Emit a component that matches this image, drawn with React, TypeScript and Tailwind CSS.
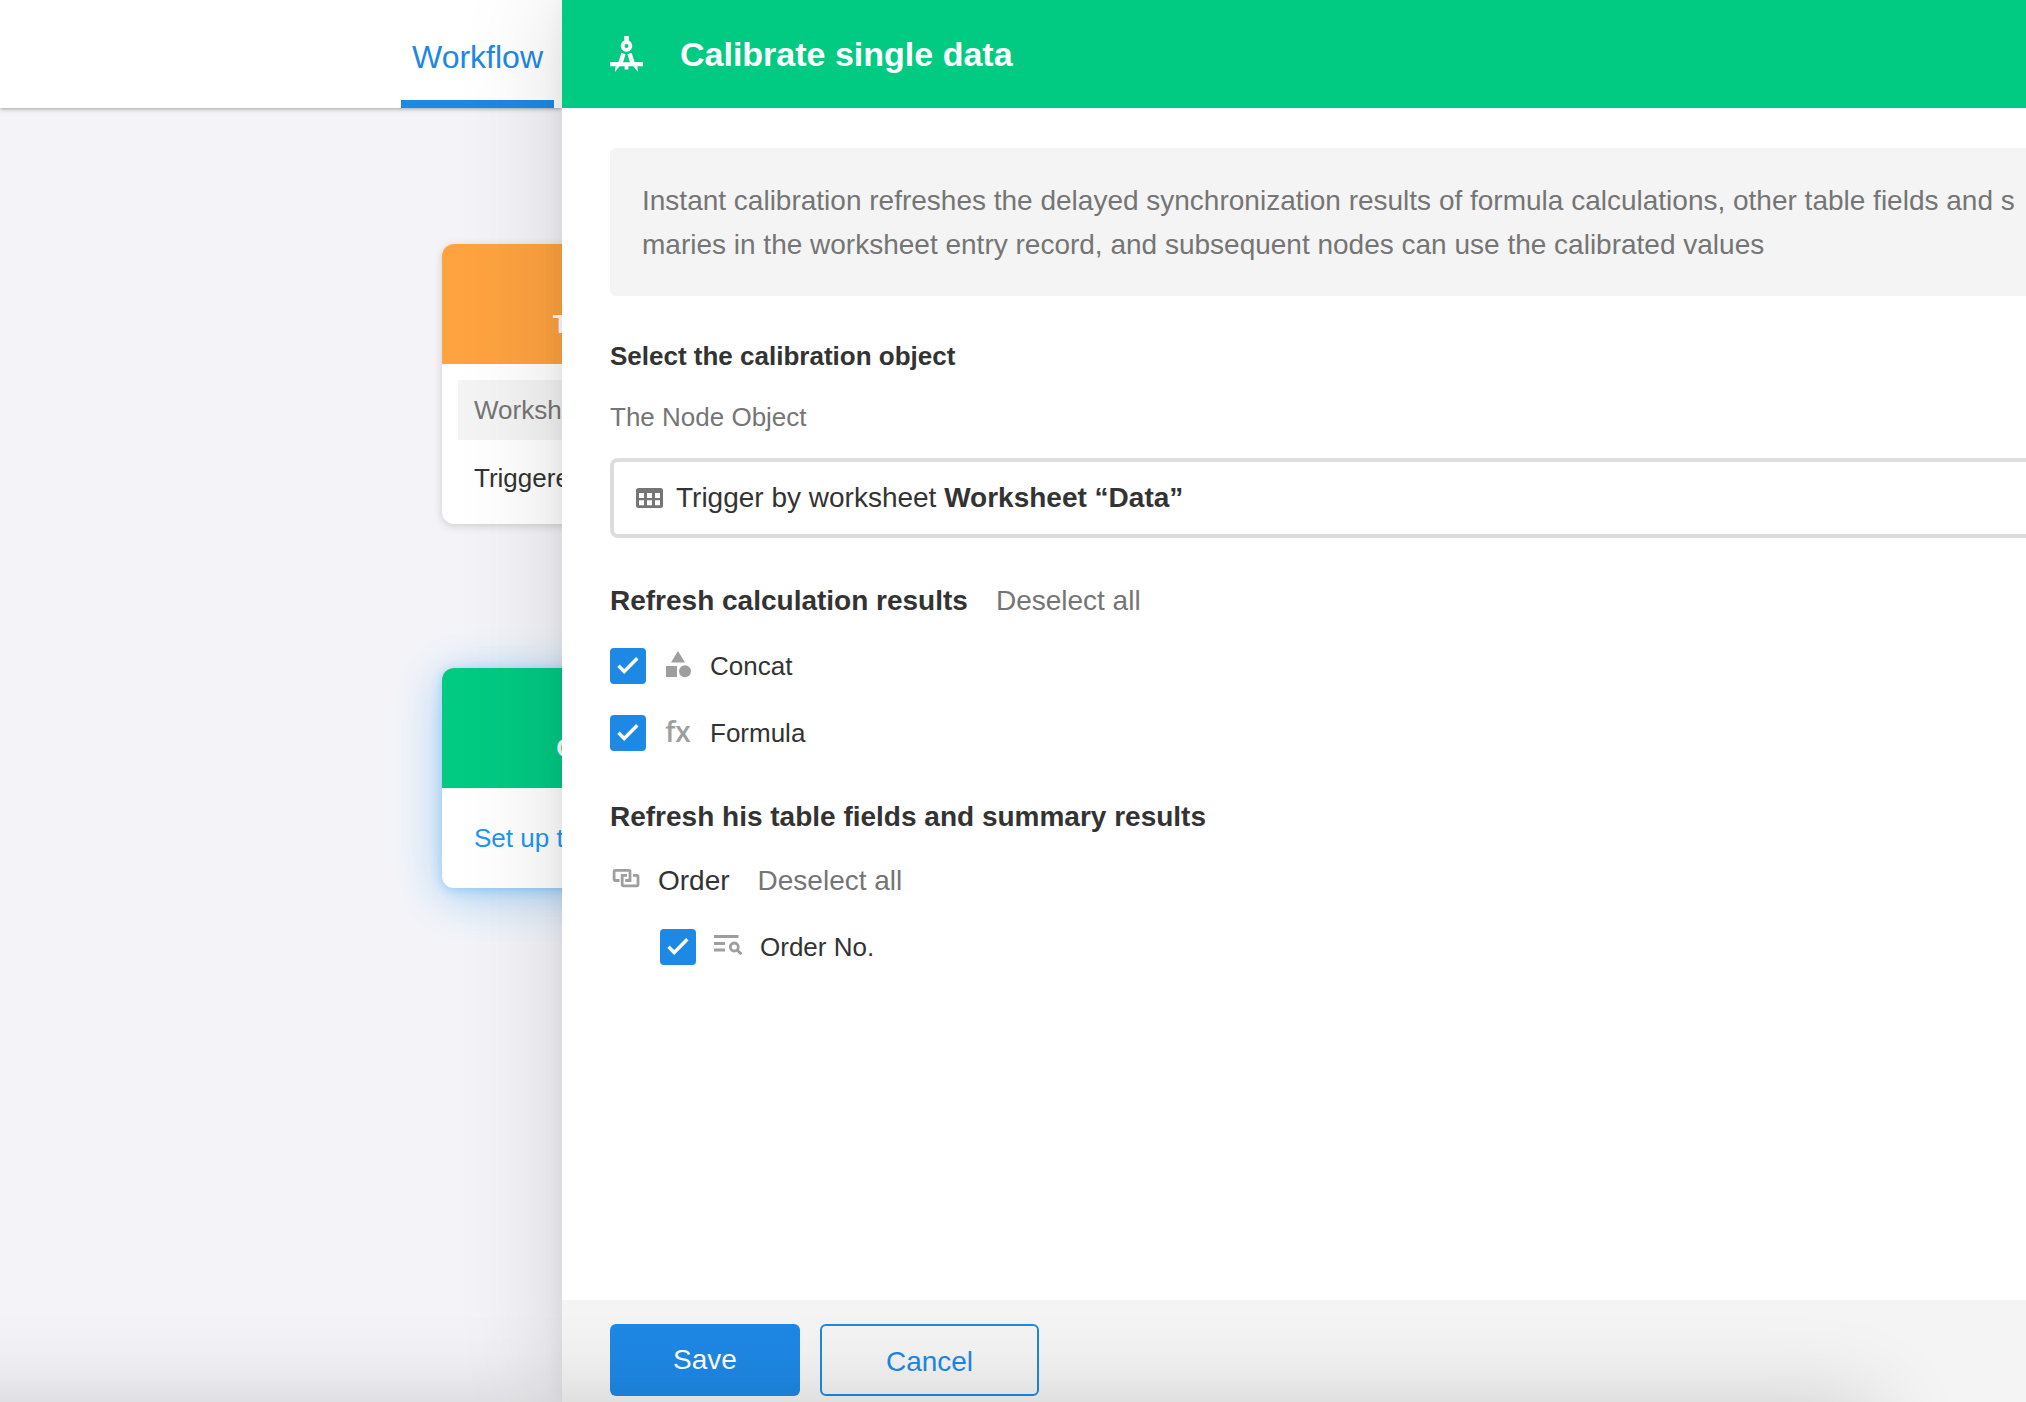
import { useState, type ReactNode } from "react";

function CalibrateIcon() {
  return (
    <svg viewBox="0 0 34 36" className="h-9 w-[34px] shrink-0" fill="currentColor">
      <path
        fillRule="evenodd"
        d="M14.200 0h4.600v4.600a5.800 5.800 0 1 1-4.600 0zM16.500 7.900a2 2 0 1 0 0 4 2 2 0 0 0 0-4z"
      />
      <path d="M11.400 16.800l4.200 1.400-2.600 8h7l-2.600-8 4.200-1.400 3 9.200H33v4.300h-5.600l.6 5.700-4.600-5.700h-5v3.200h-3.800v-3.200h-5L5 36l.6-5.700H0V26h8.400z" />
    </svg>
  );
}

function SheetIcon() {
  return (
    <svg viewBox="0 0 28 20" className="h-5 w-7 shrink-0 text-[#757575]">
      <path
        fill="currentColor"
        fillRule="evenodd"
        d="M2.500 0h22a2.500 2.500 0 0 1 2.500 2.500v15a2.500 2.500 0 0 1-2.500 2.500h-22A2.500 2.500 0 0 1 0 17.500v-15A2.500 2.500 0 0 1 2.500 0zM3 5v5h5V5zM11 5v5h5V5zM19 5v5h5V5zM3 12.300v5h5v-5zM11 12.300v5h5v-5zM19 12.300v5h5v-5z"
      />
    </svg>
  );
}

function ShapesIcon() {
  return (
    <svg viewBox="0 0 28 28" className="size-7 shrink-0" fill="currentColor">
      <path d="M14 1l7 11.500H7zM2 16h11v11H2z" />
      <circle cx="21" cy="21.300" r="6" />
    </svg>
  );
}

function LinkedIcon() {
  return (
    <svg viewBox="0 0 30 24" className="h-6 w-[30px] shrink-0 text-[#9e9e9e]" fill="none" stroke="currentColor" strokeWidth="2.800">
      <path d="M9.500 11.500H5.300a1.200 1.200 0 0 1-1.200-1.200V2.600a1.200 1.200 0 0 1 1.200-1.200h13.500A1.200 1.200 0 0 1 20 2.600v8.900h-4.800" />
      <path d="M17 6.400h-4.800v9.200a1.200 1.200 0 0 0 1.200 1.200h13.400a1.200 1.200 0 0 0 1.200-1.200V7.600a1.200 1.200 0 0 0-1.200-1.200H23" />
    </svg>
  );
}

function LookupIcon() {
  return (
    <svg viewBox="0 0 28 20" className="h-5 w-7 shrink-0" fill="none" stroke="currentColor" strokeWidth="2.800">
      <path d="M0 1.500h24.500M0 8.500h11M0 15h11" />
      <circle cx="20.300" cy="12" r="4" />
      <path d="M23 15l4.400 4.200" />
    </svg>
  );
}

function CheckRow({ icon, label }: { icon: ReactNode; label: string }) {
  const [checked, setChecked] = useState(true);

  return (
    <label className="flex h-9 items-center text-[26px] leading-9">
      <span className="grid shrink-0">
        <input
          type="checkbox"
          checked={checked}
          onChange={(e) => setChecked(e.target.checked)}
          className="col-start-1 row-start-1 size-9 appearance-none rounded border-2 border-[#bdbdbd] checked:border-[#1e88e5] checked:bg-[#1e88e5]"
        />
        {checked && (
          <svg viewBox="0 0 36 36" className="pointer-events-none col-start-1 row-start-1 size-9" fill="none" stroke="#fff" strokeWidth="3.400">
            <path d="M8.500 17.800l5.700 5.700L27.300 10.300" />
          </svg>
        )}
      </span>
      <span className="ml-[18px] flex w-7 justify-center pb-1 text-[#9e9e9e]">{icon}</span>
      <span className="ml-[18px]">{label}</span>
    </label>
  );
}

export default function App() {
  return (
    <div className="relative flex min-h-screen overflow-hidden bg-[#f4f4f8] font-['Liberation_Sans',Arial,sans-serif] text-[#333]">
      <div className="flex w-[562px] shrink-0 flex-col">
        <header className="flex h-[108px] shrink-0 justify-end bg-white pr-2 shadow-[0_1px_4px_rgba(0,0,0,0.35)]">
          <a href="#workflow" className="flex w-[153px] items-center justify-center border-b-8 border-[#1e88e5] pt-3.5 text-[32px] leading-10 text-[#1e88e5]">
            Workflow
          </a>
        </header>

        <main className="flex flex-col gap-36 pt-34 pb-20 pl-[442px]">
          <section className="w-[340px] rounded-xl bg-white text-[26px] shadow-[0_2px_8px_rgba(0,0,0,0.16)]">
            <h2 className="flex h-[120px] items-end justify-center rounded-t-xl bg-[#ffa340] pb-5 font-bold text-white">Triggered</h2>
            <div className="h-40 px-4 pt-4">
              <p className="bg-[#f4f4f4] px-4 leading-[60px] text-[#757575]">Worksheet</p>
              <p className="px-4 leading-[76px] whitespace-nowrap">Triggered when</p>
            </div>
          </section>
          <section className="w-[340px] rounded-xl bg-white text-[26px] shadow-[0_2px_12px_rgba(33,150,243,0.3),0_8px_48px_rgba(33,150,243,0.4)]">
            <h2 className="flex h-[120px] items-end justify-center rounded-t-xl bg-[#01ca83] pb-5 font-bold text-white">Calibrate</h2>
            <a href="#setup" className="block px-8 leading-[100px] text-[#2196f3]">
              Set up this node
            </a>
          </section>
        </main>
      </div>

      <aside className="relative flex min-w-0 flex-1 flex-col bg-white shadow-[0_0_20px_rgba(0,0,0,0.06),0_0_100px_rgba(0,0,0,0.14)]">
        <header className="flex h-[108px] shrink-0 items-center gap-9 bg-[#01ca83] pl-12 text-white">
          <CalibrateIcon />
          <h1 className="text-[34px] leading-10 font-bold">Calibrate single data</h1>
        </header>

        <div className="flex flex-1 flex-col overflow-hidden pt-10 pl-12">
          <p className="rounded-l-md bg-[#f4f4f4] pt-[31px] pb-[29px] pl-8 text-[28px] leading-[44px] whitespace-nowrap text-[#757575]">
            Instant calibration refreshes the delayed synchronization results of formula calculations, other table fields and s
            <br />
            maries in the worksheet entry record, and subsequent nodes can use the calibrated values
          </p>

          <h2 className="mt-10 text-[26px] leading-10 font-bold">Select the calibration object</h2>
          <p className="mt-[21px] text-[26px] leading-10 text-[#757575]">The Node Object</p>
          <button type="button" className="mt-[21px] flex h-20 items-center gap-3 rounded-l-lg border-4 border-r-0 border-[#ddd] bg-white pl-[22px] text-left text-[28px]">
            <SheetIcon />
            <span>
              Trigger by worksheet <b>Worksheet “Data”</b>
            </span>
          </button>

          <div className="mt-[43px] flex items-center gap-7 text-[28px] leading-10">
            <h2 className="font-bold">Refresh calculation results</h2>
            <button type="button" className="text-[#757575]">Deselect all</button>
          </div>
          <div className="mt-[27px] flex flex-col gap-[31px]">
            <CheckRow icon={<ShapesIcon />} label="Concat" />
            <CheckRow icon={<span className="font-['Open_Sans',sans-serif] text-[28px] font-semibold">fx</span>} label="Formula" />
          </div>

          <h2 className="mt-[46px] text-[28px] leading-10 font-bold">Refresh his table fields and summary results</h2>
          <div className="mt-6 flex items-center text-[28px] leading-10">
            <LinkedIcon />
            <span className="ml-[18px]">Order</span>
            <button type="button" className="ml-7 text-[#757575]">Deselect all</button>
          </div>
          <div className="mt-7 pl-[50px]">
            <CheckRow icon={<LookupIcon />} label="Order No." />
          </div>
        </div>

        <footer className="flex h-[102px] shrink-0 gap-5 bg-[#f4f4f4] pt-6 pl-12 text-[28px]">
          <button type="button" className="h-[72px] w-[190px] rounded-md bg-[#1e88e5] text-white">Save</button>
          <button type="button" className="h-[72px] w-[219px] rounded-md border-2 border-[#1e88e5] pt-1 text-[#1e88e5]">Cancel</button>
        </footer>
      </aside>

      <div className="pointer-events-none absolute top-full right-[150px] -left-32 h-60 shadow-[0_0_90px_rgba(0,0,0,0.16)]" />
    </div>
  );
}
